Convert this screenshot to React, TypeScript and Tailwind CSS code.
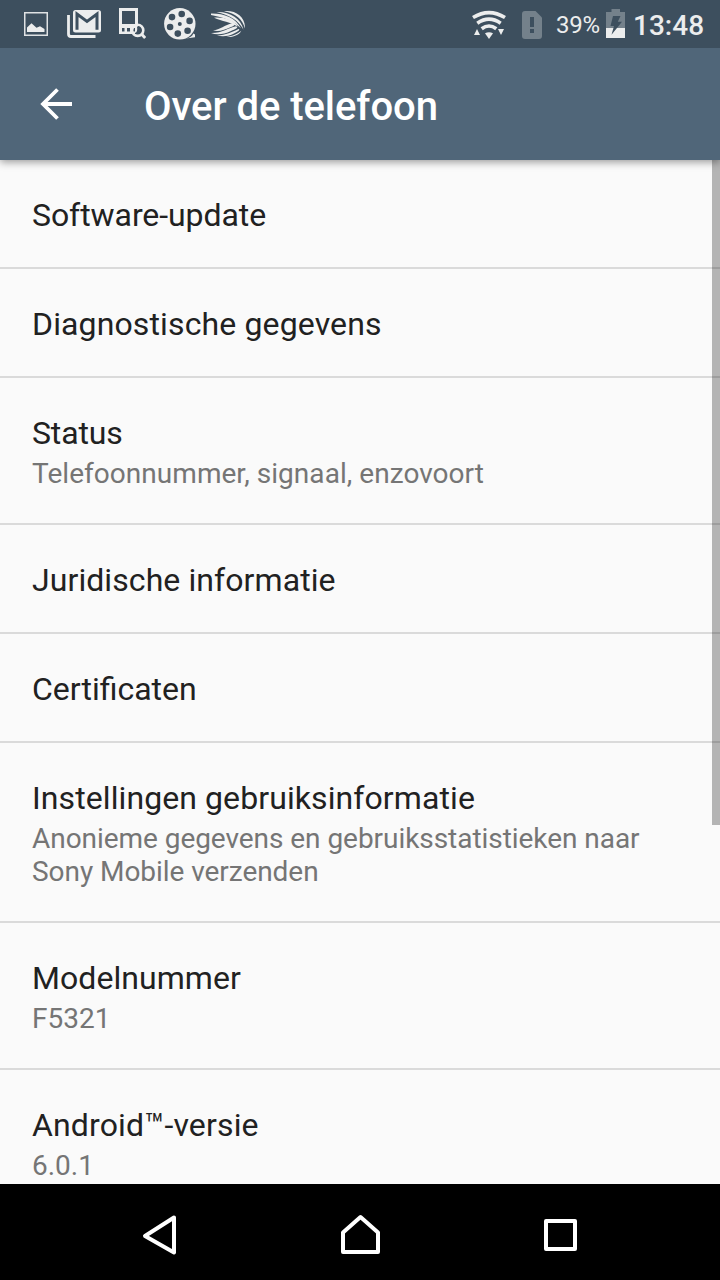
import type { ReactNode } from 'react';

interface SettingItem {
  title: string;
  summary?: string;
  titleClass?: string;
  summaryClass?: string;
}

const items: SettingItem[] = [
  { title: 'Software-update', titleClass: 'tracking-[-0.07px]' },
  { title: 'Diagnostische gegevens', titleClass: 'tracking-[0.13px]' },
  {
    title: 'Status',
    titleClass: 'tracking-[-0.15px]',
    summary: 'Telefoonnummer, signaal, enzovoort',
    summaryClass: 'tracking-[0.04px]',
  },
  { title: 'Juridische informatie', titleClass: 'tracking-[0.08px]' },
  { title: 'Certificaten' },
  {
    title: 'Instellingen gebruiksinformatie',
    titleClass: 'tracking-[0.09px]',
    summary: 'Anonieme gegevens en gebruiksstatistieken naar Sony Mobile verzenden',
    summaryClass: 'tracking-[-0.05px]',
  },
  { title: 'Modelnummer', titleClass: 'tracking-[0.06px]', summary: 'F5321' },
  { title: 'Android™-versie', titleClass: 'tracking-[0.15px]', summary: '6.0.1' },
];

const PictureIcon = () => (
  <svg className="w-6 h-12 shrink-0" viewBox="0 0 24 48" fill="none">
    <rect x="0.75" y="12.75" width="22.5" height="22.5" stroke="#dfe2e4" strokeWidth="1.5" />
    <path d="M3 32V27.5L7.5 23.3L12.5 27.8L16 26.3L20.5 29V32Z" fill="#eceded" />
  </svg>
);

const MailIcon = () => (
  <svg className="w-[34px] h-12 shrink-0" viewBox="0 0 34 48" fill="none">
    <path d="M1.5 15V34Q1.5 36.5 4 36.5H28.5" stroke="#eceded" strokeWidth="2.8" />
    <rect x="6" y="10" width="28" height="22.5" rx="2.5" fill="#eceded" />
    <path d="M10 29.8V14L20 21.4L30 14V29.8" stroke="#3d4f5e" strokeWidth="3" />
  </svg>
);

const DeviceSearchIcon = () => (
  <svg className="w-[27px] h-12 shrink-0" viewBox="0 0 27 48" fill="none">
    <path d="M0 8H19V25H0Z M3 11V24H16V11Z" fill="#eceded" fillRule="evenodd" />
    <path d="M0 24H19V34H0Z M3 28V31.5H5.5V28Z M8 28V31.5H11V28Z M13 28V31.5H16V28Z" fill="#eceded" fillRule="evenodd" />
    <circle cx="18.7" cy="30.3" r="5.6" stroke="#eceded" strokeWidth="2.6" />
    <path d="M18 26.5Q22 26.5 22 30.5Q22 34 18.5 34H16V33Q19 32 18 26.5Z" fill="#3d4f5e" />
    <path d="M22.5 34L26.2 38" stroke="#eceded" strokeWidth="3" />
  </svg>
);

const ReelIcon = () => (
  <svg className="w-8 h-12 shrink-0" viewBox="0 0 32 48">
    <path d="M22 38.5Q28.5 37 29.2 33.5L31 34.5V37.2Z" fill="#eceded" />
    <circle cx="15.8" cy="23.8" r="15.7" fill="#eceded" />
    <g fill="#3d4f5e">
      <circle cx="15.8" cy="24" r="2" />
      <circle cx="17.7" cy="14" r="3.3" />
      <circle cx="25.6" cy="20.9" r="3.3" />
      <circle cx="23.6" cy="30.7" r="3.3" />
      <circle cx="13.8" cy="33.6" r="3.3" />
      <circle cx="6.1" cy="27" r="3.3" />
      <circle cx="8" cy="17.1" r="3.3" />
    </g>
  </svg>
);

const SwiftIcon = () => (
  <svg className="w-[34px] h-12 shrink-0" viewBox="0 0 34 48" fill="#eceded">
    <path d="M13 11.2C25 10 34.5 17 34 28.5C31.5 19 25 13.5 13 11.2Z" />
    <path d="M5.5 12C18 11.3 30 18 32.5 29.8C27.5 20.5 18.5 15 5.5 12Z" />
    <path d="M0 13.5C12 13.2 25 17.5 30 28.6C23.5 20.8 12 17.5 0 15Z" />
    <path d="M3 17.7C13 17 22.5 19.7 27 26.6C19.5 22.3 11 21 3 17.7Z" />
    <path d="M2 30.5C9 30 14 24.5 21 23.5C25 24 24 25.5 20 27C14 30 8 31.8 2 30.5Z" />
    <path d="M0 33C11 33.3 17 28 25 26.3C28.5 27.5 24 29.3 20 31C13 34.3 6 35.2 0 33Z" />
    <path d="M6 35.3C15 35.3 21 32 27.5 29C30 29.8 26 32 22 34C17 36.3 11 37 6 35.3Z" />
    <path d="M15.5 37C22 36.2 26 34 30.3 30.8C29.3 34 23 37.7 15.5 37Z" />
  </svg>
);

const WifiIcon = () => (
  <svg className="w-[34px] h-12 shrink-0" viewBox="0 0 34 48" fill="none">
    <g stroke="#eceded" strokeWidth="3.6">
      <path d="M1 17.6Q17 7.5 33 17.6" />
      <path d="M5.3 23.2Q17 15 28.7 23.2" />
      <path d="M9.7 28.8Q17 23.2 24.3 28.8" />
    </g>
    <path d="M13 33.3Q17 31.3 21 33.3L17 39Z" fill="#eceded" />
    <path d="M2 35L5 29L8 35Z M26 29H32L29 35Z" fill="#eceded" />
  </svg>
);

const SimAlertIcon = () => (
  <svg className="w-5 h-12 shrink-0" viewBox="0 0 20 48">
    <path d="M3 11H13.5L20 17.5V36Q20 39 17 39H3Q0 39 0 36V14Q0 11 3 11Z" fill="#74818b" />
    <path d="M8 17H12V27H8Z M8 29H12V33H8Z" fill="#3d4f5e" />
  </svg>
);

const BatteryIcon = () => (
  <svg className="w-[19px] h-12 shrink-0" viewBox="0 0 19 48">
    <path d="M5.5 9H14V12H19V28H0V12H5.5Z" fill="#74818b" />
    <path d="M0 28H19V38H0Z" fill="#eceded" />
    <path d="M7 16H14.5L11.8 21.8H16L5.5 34.8L8 26H4.5Z" fill="#3d4f5e" />
  </svg>
);

const StatusBar = () => (
  <div className="relative z-20 flex h-12 shrink-0 items-center bg-[#3d4f5e] pl-6 pr-4 text-[#eceded]">
    <PictureIcon />
    <div className="ml-[19px] flex gap-[18px]">
      <MailIcon />
      <DeviceSearchIcon />
      <ReelIcon />
    </div>
    <div className="ml-[15px] flex">
      <SwiftIcon />
    </div>
    <div className="ml-auto flex items-center">
      <WifiIcon />
      <div className="ml-4 flex">
        <SimAlertIcon />
      </div>
      <span className="ml-[14px] w-[43px] whitespace-nowrap pt-0.5 text-[24px] leading-[46px] tracking-[-0.3px]">39%</span>
      <div className="ml-[7px] flex">
        <BatteryIcon />
      </div>
      <span className="ml-2 w-[71px] whitespace-nowrap pt-1 text-[28px] font-medium leading-[44px]">13:48</span>
    </div>
  </div>
);

const AppBar = () => (
  <header className="relative z-10 flex h-28 shrink-0 items-center bg-[#506679] pl-10 shadow-[0_2px_8px_rgba(0,0,0,0.4)]">
    <button aria-label="Terug" className="mr-[72px]">
      <svg className="h-8 w-8" viewBox="0 0 32 32" fill="none" stroke="#fff" strokeWidth="3.8">
        <path d="M32 16H4M17.5 1.5L3 16L17.5 30.5" />
      </svg>
    </button>
    <h1 className="pt-1.5 text-[40px] font-medium leading-[48px] tracking-[-0.05px] text-white">Over de telefoon</h1>
  </header>
);

const SettingRow = ({ title, summary, titleClass = '', summaryClass = '' }: SettingItem) => (
  <li className="shrink-0 border-b-2 border-[#dadada] px-8 pb-[33px] pt-9">
    <div className={`text-[32px] leading-[38px] text-[#212121] ${titleClass}`}>{title}</div>
    {summary && (
      <div className={`mt-[5px] text-[28px] leading-[33px] text-[#757575] ${summaryClass}`}>{summary}</div>
    )}
  </li>
);

const NavButton = ({ label, children }: { label: string; children: ReactNode }) => (
  <button aria-label={label} className="flex h-24 w-[200px] items-center justify-center">
    <svg className="h-12 w-12" viewBox="0 0 48 48" fill="none" stroke="#fff" strokeWidth="4" strokeLinejoin="round">
      {children}
    </svg>
  </button>
);

const NavigationBar = () => (
  <nav className="flex h-24 shrink-0 justify-center bg-black">
    <NavButton label="Vorige">
      <path d="M38 9L9 27.5L38 44Z" transform="translate(0 0.5)" />
    </NavButton>
    <NavButton label="Startscherm">
      <path d="M7 44V24.5L24.5 9L42 24.5V44Z" />
    </NavButton>
    <NavButton label="Overzicht">
      <path d="M10 13H39V41H10Z" />
    </NavButton>
  </nav>
);

const App = () => {
  return (
    <div className="flex h-[1280px] w-[720px] flex-col overflow-hidden bg-[#fafafa] font-[Roboto,sans-serif]">
      <StatusBar />
      <AppBar />
      <main className="relative min-h-0 flex-1 overflow-hidden">
        <ul className="flex flex-col">
          {items.map((item) => (
            <SettingRow key={item.title} {...item} />
          ))}
        </ul>
        {/* Scrollbar thumb */}
        <div className="absolute right-0 top-0 h-[665px] w-2 bg-black/28" />
      </main>
      <NavigationBar />
    </div>
  );
};

export default App;
